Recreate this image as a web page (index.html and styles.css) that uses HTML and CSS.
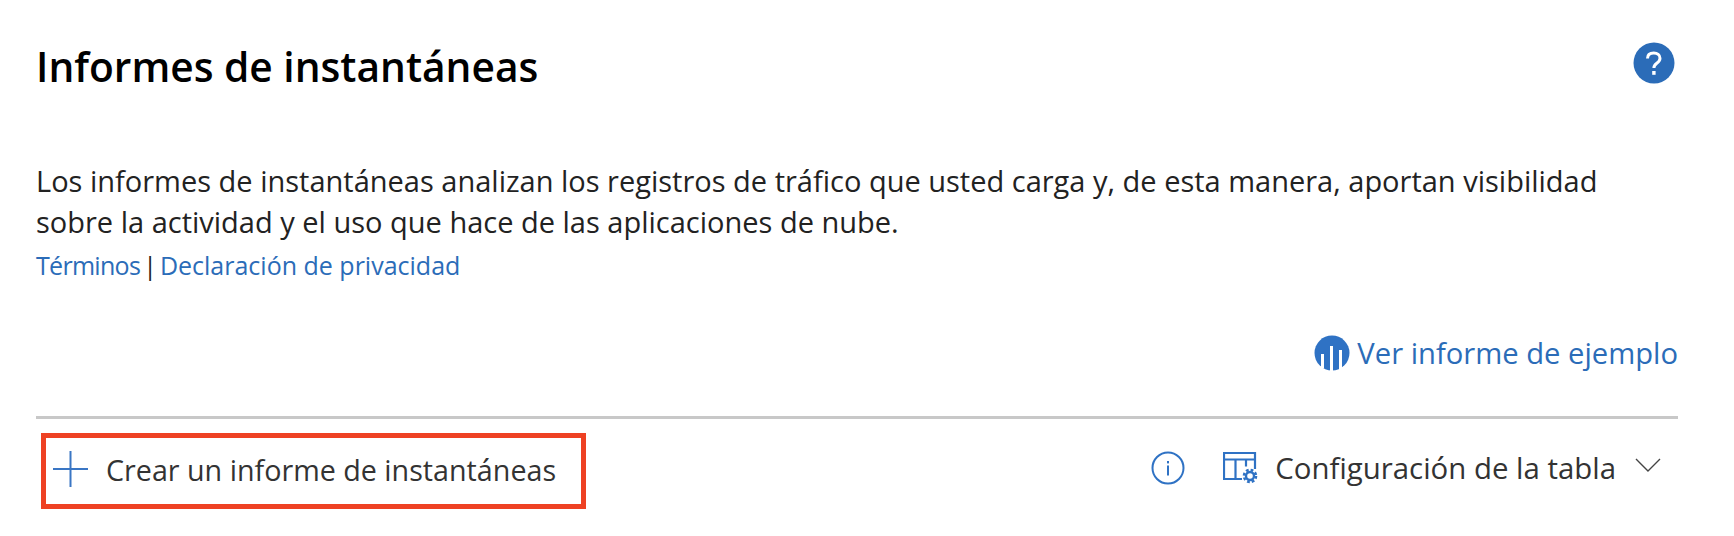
FILE: index.html
```html
<!DOCTYPE html>
<html lang="es">

<head>
    <meta charset="UTF-8">
    <title>Informes de instantáneas</title>
    <link rel="stylesheet" href="styles.css">
</head>

<body>
    <div class="page">
        <header class="head">
            <h1>Informes de instantáneas</h1>
            <svg class="help" width="42" height="42" viewBox="0 0 42 42">
                <circle cx="21" cy="21" r="20.5" fill="#2b6cb8" />
                <path d="M14.5 16.500c0-3.800 2.800-5.500 6.300-5.500s6.200 2 6.200 5.200c0 2.600-1.500 3.800-3.200 5-1.800 1.300-2.900 2.300-2.900 4.800" fill="none" stroke="#fff" stroke-width="3" />
                <rect x="19.200" y="29" width="3.400" height="3.800" fill="#fff" />
            </svg>
        </header>

        <p class="intro">Los informes de instantáneas analizan los registros de tráfico que usted carga y, de esta manera, aportan visibilidad sobre la actividad y el uso que hace de las aplicaciones de nube.</p>
        <p class="links"><a href="#" class="terms">Términos</a> | <a href="#" class="privacy">Declaración de privacidad</a></p>

        <div class="sample">
            <a href="#" class="sample-link">
                <svg width="36" height="36" viewBox="0 0 36 36">
                    <circle cx="18" cy="18" r="17.500" fill="#2f72c4" />
                    <path d="M8.500 19v14M17.500 11v25M26.500 15v19" stroke="#fff" stroke-width="3" />
                </svg>
                Ver informe de ejemplo
            </a>
        </div>

        <div class="toolbar">
            <button class="create">
                <svg width="35" height="36" viewBox="0 0 35 36">
                    <path d="M0 18h35M17.500 0v36" stroke="#3a76c4" stroke-width="2" fill="none" />
                </svg>
                Crear un informe de instantáneas
            </button>
            <div class="tools">
                <svg class="info" width="34" height="34" viewBox="0 0 34 34">
                    <circle cx="17" cy="17" r="15.500" fill="none" stroke="#2f72c4" stroke-width="2" />
                    <rect x="16" y="14.500" width="2" height="10" fill="#2f72c4" />
                    <rect x="16" y="10" width="2" height="2.400" fill="#2f72c4" />
                </svg>
                <button class="config">
                    <svg width="35" height="32" viewBox="0 0 35 32">
                        <path d="M1 27V1h31v16M1 7.500h31M0 27h19M12.500 7.500V27M23 7.500v7" fill="none" stroke="#2f72c4" stroke-width="2.200" />
                        <circle cx="27" cy="24" r="4" fill="none" stroke="#2f72c4" stroke-width="2.400" />
                        <circle cx="27" cy="24" r="6" fill="none" stroke="#2f72c4" stroke-width="2.600" stroke-dasharray="2.700 2" />
                    </svg>
                    Configuración de la tabla
                    <svg class="chev" width="26" height="14" viewBox="0 0 26 14">
                        <path d="M1 1l12 12L25 1" fill="none" stroke="#444" stroke-width="1.400" />
                    </svg>
                </button>
            </div>
        </div>
    </div>
</body>

</html>
```

FILE: styles.css
```css
body {
    margin: 0;
    background: #fff;
    font-family: "Open Sans", "Noto Sans", sans-serif;
    color: #222;
    overflow: hidden;
}

a {
    color: #2b6cb8;
    text-decoration: none;
}

.page {
    padding: 44px 56px 0 36px;
}

.head {
    display: flex;
    justify-content: space-between;
    align-items: flex-start;
    height: 116px;
}

h1 {
    margin: 0;
    font-size: 40.700px;
    line-height: 44px;
    font-weight: 600;
    color: #000;
}

.help {
    margin-top: -2px;
    margin-right: 3px;
}

.intro {
    margin: 0;
    width: 1590px;
    font-size: 29px;
    line-height: 41px;
}

.links {
    margin: 3px 0 0;
    font-size: 25px;
    line-height: 40px;
    word-spacing: -3.500px;
}

.terms {
    letter-spacing: -0.7px;
}

.privacy {
    word-spacing: 0;
}

.sample {
    display: flex;
    justify-content: flex-end;
    margin-top: 48px;
}

.sample-link {
    display: flex;
    align-items: center;
    gap: 7px;
    font-size: 29.200px;
    line-height: 40px;
}

.toolbar {
    display: flex;
    justify-content: space-between;
    align-items: center;
    margin-top: 43px;
    border-top: 3px solid #c8c8c8;
    padding-top: 14px;
}

.create {
    display: flex;
    align-items: center;
    gap: 18px;
    box-sizing: border-box;
    width: 545px;
    height: 76px;
    margin-left: 5px;
    padding: 0 0 4px 7px;
    border: 5px solid #ee4123;
    background: #fff;
    font: inherit;
    font-size: 28.700px;
    color: #333;
}

.tools {
    display: flex;
    align-items: center;
    gap: 38px;
    margin-right: 17px;
    margin-top: -6px;
}

.config {
    display: flex;
    align-items: center;
    gap: 17px;
    padding: 0;
    border: none;
    background: none;
    font: inherit;
    font-size: 29.400px;
    color: #333;
}

.chev {
    margin-left: 2px;
    margin-bottom: 6px;
}
```
